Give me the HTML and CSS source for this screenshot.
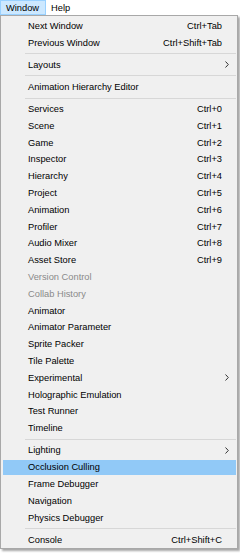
FILE: index.html
```html
<!DOCTYPE html>
<html>
<head>
<meta charset="utf-8">
<link rel="stylesheet" href="styles.css">
</head>
<body>
<div class="menubar">
  <span class="mb-item active">Window</span>
  <span class="mb-item">Help</span>
</div>
<div class="menu">
  <div class="item"><span class="label">Next Window</span><span class="sc">Ctrl+Tab</span></div>
  <div class="item"><span class="label">Previous Window</span><span class="sc">Ctrl+Shift+Tab</span></div>
  <div class="sep"></div>
  <div class="item"><span class="label">Layouts</span><svg class="arrow" width="4" height="7" viewBox="0 0 4 7"><path d="M0.5 0.5 L3.3 3.5 L0.5 6.5" fill="none" stroke="#333" stroke-width="1"/></svg></div>
  <div class="sep"></div>
  <div class="item"><span class="label">Animation Hierarchy Editor</span></div>
  <div class="sep"></div>
  <div class="item"><span class="label">Services</span><span class="sc">Ctrl+0</span></div>
  <div class="item"><span class="label">Scene</span><span class="sc">Ctrl+1</span></div>
  <div class="item"><span class="label">Game</span><span class="sc">Ctrl+2</span></div>
  <div class="item"><span class="label">Inspector</span><span class="sc">Ctrl+3</span></div>
  <div class="item"><span class="label">Hierarchy</span><span class="sc">Ctrl+4</span></div>
  <div class="item"><span class="label">Project</span><span class="sc">Ctrl+5</span></div>
  <div class="item"><span class="label">Animation</span><span class="sc">Ctrl+6</span></div>
  <div class="item"><span class="label">Profiler</span><span class="sc">Ctrl+7</span></div>
  <div class="item"><span class="label">Audio Mixer</span><span class="sc">Ctrl+8</span></div>
  <div class="item"><span class="label">Asset Store</span><span class="sc">Ctrl+9</span></div>
  <div class="item disabled"><span class="label">Version Control</span></div>
  <div class="item disabled"><span class="label">Collab History</span></div>
  <div class="item"><span class="label">Animator</span></div>
  <div class="item"><span class="label">Animator Parameter</span></div>
  <div class="item"><span class="label">Sprite Packer</span></div>
  <div class="item"><span class="label">Tile Palette</span></div>
  <div class="item"><span class="label">Experimental</span><svg class="arrow" width="4" height="7" viewBox="0 0 4 7"><path d="M0.5 0.5 L3.3 3.5 L0.5 6.5" fill="none" stroke="#333" stroke-width="1"/></svg></div>
  <div class="item"><span class="label">Holographic Emulation</span></div>
  <div class="item"><span class="label">Test Runner</span></div>
  <div class="item"><span class="label">Timeline</span></div>
  <div class="sep"></div>
  <div class="item"><span class="label">Lighting</span><svg class="arrow" width="4" height="7" viewBox="0 0 4 7"><path d="M0.5 0.5 L3.3 3.5 L0.5 6.5" fill="none" stroke="#333" stroke-width="1"/></svg></div>
  <div class="item hover"><span class="label">Occlusion Culling</span></div>
  <div class="item"><span class="label">Frame Debugger</span></div>
  <div class="item"><span class="label">Navigation</span></div>
  <div class="item"><span class="label">Physics Debugger</span></div>
  <div class="sep"></div>
  <div class="item"><span class="label">Console</span><span class="sc">Ctrl+Shift+C</span></div>
</div>
</body>
</html>
```
FILE: styles.css
```css
html, body {
  margin: 0;
  padding: 0;
  background: #ffffff;
}
body {
  font-family: "Liberation Sans", Arial, sans-serif;
  font-size: 9.3px;
  color: #000;
  width: 240px;
  height: 553px;
  overflow: hidden;
}
.menubar {
  display: flex;
  height: 15px;
  align-items: stretch;
  background: #ffffff;
}
.mb-item {
  display: flex;
  align-items: center;
  padding: 0 4px;
  border: 1px solid transparent;
  box-sizing: border-box;
}
.mb-item.active {
  background: #cce8ff;
  border-color: #99d1ff;
  width: 46px;
  padding-left: 5px;
}
.menu {
  width: 238px;
  box-sizing: border-box;
  background: #f0f0f0;
  border: 1px solid #a8a8a8;
  padding: 1.4px 0 0 0;
  box-shadow: 2px 2px 2px rgba(0, 0, 0, 0.35);
  display: flex;
  flex-direction: column;
}
.item {
  height: 16.8px;
  margin: 0 1px 0 2px;
  padding: 0 14px 0 25px;
  display: flex;
  align-items: center;
  white-space: nowrap;
  box-sizing: border-box;
}
.label {
  flex: 1;
}
.sc {
  text-align: right;
}
.arrow {
  margin-right: -7px;
  display: block;
}
.disabled {
  color: #8a8a8a;
}
.hover {
  height: 15px;
  margin-top: 0.9px;
  margin-bottom: 0.9px;
  background: #91c9f7;
}
.sep {
  height: 1px;
  background: #d7d7d7;
  margin: 2.2px 1px 2.2px 24px;
}
```
